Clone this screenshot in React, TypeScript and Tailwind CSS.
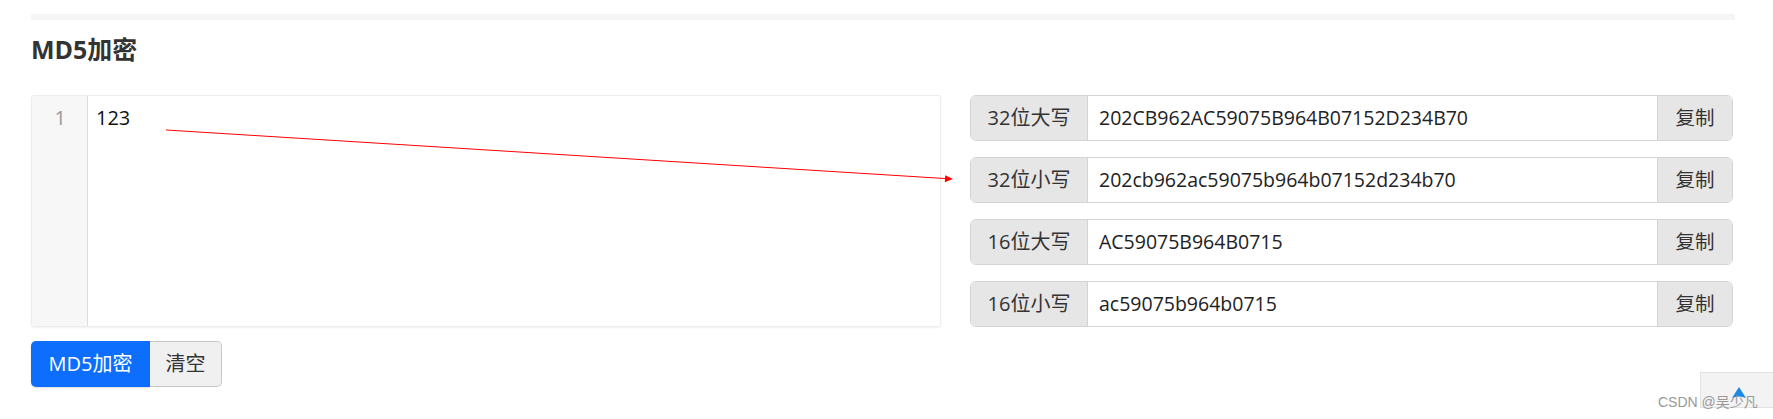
import React from "react";

const rows = [
  { label: "32位大写", value: "202CB962AC59075B964B07152D234B70" },
  { label: "32位小写", value: "202cb962ac59075b964b07152d234b70" },
  { label: "16位大写", value: "AC59075B964B0715" },
  { label: "16位小写", value: "ac59075b964b0715" },
];

function ResultRow({ label, value }: { label: string; value: string }) {
  return (
    <div className="flex h-[46px] rounded-[6px] border border-[#d4d4d4] overflow-hidden">
      <div className="w-[117px] shrink-0 flex items-center justify-center bg-[#e6e6e6] border-r border-[#d4d4d4] text-[20px] text-[#333]">
        {label}
      </div>
      <div className="flex-1 flex items-center px-[11px] bg-white text-[19.5px] text-[#222]">
        {value}
      </div>
      <button className="w-[75px] shrink-0 flex items-center justify-center bg-[#e6e6e6] border-l border-[#d4d4d4] text-[19.5px] text-[#333]">
        复制
      </button>
    </div>
  );
}

export default function App() {
  return (
    <div className="relative w-[1773px] h-[419px] overflow-hidden bg-white font-['Open_Sans','Noto_Sans_CJK_SC',sans-serif]">
      <div className="pl-[31px] pr-[38px] pt-[14px]">
        <div className="h-[6px] bg-[#f5f5f5]" />
        <h5 className="mt-[14px] text-[25px] font-bold leading-[30px] text-[#333]">MD5加密</h5>

        <div className="mt-[31px] flex gap-[29px]">
          {/* Editor + actions */}
          <div className="w-[910px] flex flex-col">
            <div className="h-[232px] flex rounded-[3px] border border-[#ececec] shadow-[0_1px_2px_rgba(0,0,0,0.06)] overflow-hidden">
              <div className="w-[56px] shrink-0 bg-[#f7f7f7] border-r border-[#dddddd] pt-[8px] pr-[21px] text-right text-[20px] leading-[28px] text-[#999]">
                1
              </div>
              <div className="flex-1 bg-white pt-[8px] pl-[8px] text-[20px] leading-[28px] text-[#111]">
                123
              </div>
            </div>
            <div className="mt-[14px] flex">
              <button className="h-[46px] w-[119px] rounded-l-[5px] bg-[#0d6efd] text-[20px] text-white shadow-[0_1px_2px_rgba(0,0,0,0.15)]">
                MD5加密
              </button>
              <button className="h-[46px] w-[72px] rounded-r-[5px] border border-l-0 border-[#c8c8c8] bg-[#f0f0f0] text-[20px] text-[#333]">
                清空
              </button>
            </div>
          </div>

          {/* Results */}
          <div className="w-[763px] flex flex-col gap-4">
            {rows.map((r) => (
              <ResultRow key={r.label} label={r.label} value={r.value} />
            ))}
          </div>
        </div>
      </div>

      {/* red annotation arrow */}
      <svg className="absolute left-0 top-0 pointer-events-none" width="1773" height="419">
        <line x1="166" y1="130" x2="946" y2="178.6" stroke="#ff0000" strokeWidth="1" />
        <polygon points="953,179 945.2,175.2 944.8,182.2" fill="#ff0000" />
      </svg>

      {/* back to top */}
      <div className="absolute left-[1700px] top-[372px] w-[80px] h-[36px] bg-[#f3f3f3] border border-[#e2e2e2]">
        <svg className="absolute left-[30px] top-[14px]" width="16" height="16" viewBox="0 0 16 16">
          <path d="M8 0 L15 11 Q8 8 1 11 Z" fill="#1e88e5" />
        </svg>
      </div>
      <div className="absolute left-[1658px] top-[393px] text-[14px] leading-[18px] text-[#999] font-['Liberation_Sans','Noto_Sans_CJK_SC',sans-serif]">
        CSDN @吴少凡
      </div>
    </div>
  );
}
